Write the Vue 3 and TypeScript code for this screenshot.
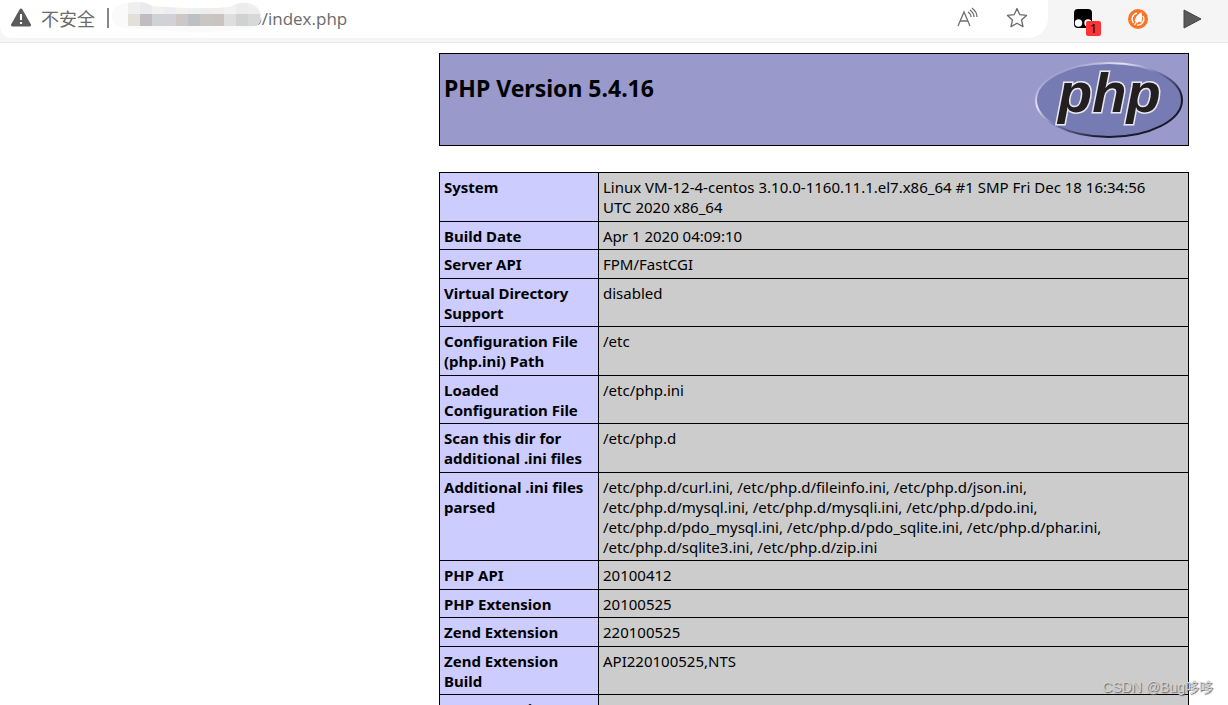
<script setup lang="ts">
interface InfoRow {
  label: string
  value: string
}

const rows: InfoRow[] = [
  { label: 'System', value: 'Linux VM-12-4-centos 3.10.0-1160.11.1.el7.x86_64 #1 SMP Fri Dec 18 16:34:56\nUTC 2020 x86_64' },
  { label: 'Build Date', value: 'Apr 1 2020 04:09:10' },
  { label: 'Server API', value: 'FPM/FastCGI' },
  { label: 'Virtual Directory Support', value: 'disabled' },
  { label: 'Configuration File (php.ini) Path', value: '/etc' },
  { label: 'Loaded\nConfiguration File', value: '/etc/php.ini' },
  { label: 'Scan this dir for additional .ini files', value: '/etc/php.d' },
  {
    label: 'Additional .ini files parsed',
    value:
      '/etc/php.d/curl.ini, /etc/php.d/fileinfo.ini, /etc/php.d/json.ini,\n/etc/php.d/mysql.ini, /etc/php.d/mysqli.ini, /etc/php.d/pdo.ini,\n/etc/php.d/pdo_mysql.ini, /etc/php.d/pdo_sqlite.ini, /etc/php.d/phar.ini,\n/etc/php.d/sqlite3.ini, /etc/php.d/zip.ini',
  },
  { label: 'PHP API', value: '20100412' },
  { label: 'PHP Extension', value: '20100525' },
  { label: 'Zend Extension', value: '220100525' },
  { label: 'Zend Extension\nBuild', value: 'API220100525,NTS' },
  { label: 'PHP Extension\nBuild', value: 'API20100525,NTS' },
]

const upperCells: string[] = ['#efefef', '#e8eaed', '#f1f1f0', '#eeeef2', '#f2f1f0', '#eeefef', '#ededee', '#eeeeed', '#f2f2f2', '#ececec', '#eeeeee']
const lowerCells: string[] = ['#e1e1da', '#c0bcc0', '#d0d3d5', '#d2d1d8', '#cdc7c5', '#bbc1c4', '#c9c7c6', '#c9c3c1', '#dedede', '#d0d2d2', '#d8d8d8']
</script>

<template>
  <div class="page">
    <header class="toolbar">
      <div class="address">
        <button class="security" type="button">
          <svg viewBox="0 0 20 20" width="20" height="20" aria-hidden="true">
            <path d="M10 2 18.500 17H1.500Z" fill="#5c5c5c" stroke="#5c5c5c" stroke-width="3" stroke-linejoin="round" />
            <path d="M10 6v6M10 14v2" stroke="#fff" stroke-width="2" />
          </svg>
          <span>不安全</span>
        </button>
        <span class="divider"></span>
        <svg class="masked" viewBox="0 0 150 32" width="150" height="32" aria-hidden="true">
          <defs>
            <clipPath id="smudge">
              <path d="M0 14Q0 3 14 1L26 0Q34 0 40 4Q90 8 118 5Q126 0 136 1Q149 4 149 15Q149 24 138 27Q90 32 60 29L14 26Q0 24 0 14Z" />
            </clipPath>
          </defs>
          <g clip-path="url(#smudge)">
            <rect width="150" height="32" fill="#fafafa" />
            <rect v-for="(c, i) in upperCells" :key="'u' + i" :x="16 + i * 12" y="0" width="12" height="12" :fill="c" />
            <rect v-for="(c, i) in lowerCells" :key="'l' + i" :x="16 + i * 12" y="12" width="12" height="12" :fill="c" />
          </g>
        </svg>
        <span class="url">0/index.php</span>
        <button class="icon read" type="button" aria-label="Read aloud">
          <svg viewBox="0 0 22 22" width="22" height="22" fill="none" stroke="#707070" stroke-width="1.300">
            <path d="M2 19 8 5l6 14M4 14h8M12 5q3 2 3 5M14 3q4 3 4 7M16 1q5 4 5 9" />
          </svg>
        </button>
        <button class="icon" type="button" aria-label="Add to favourites">
          <svg viewBox="0 0 22 22" width="22" height="22" fill="none" stroke="#6a6a6a" stroke-width="1.300" stroke-linejoin="round">
            <path d="m11 1.500 2.800 6.200 6.700.7-5 4.600 1.500 6.600-6-3.400-6 3.400 1.500-6.600-5-4.600 6.700-.7Z" />
          </svg>
        </button>
      </div>
      <nav class="extensions">
        <button class="icon" type="button" aria-label="Tampermonkey">
          <svg viewBox="0 0 28 34" width="28" height="34">
            <rect x="1" y="7" width="18" height="19" rx="4" fill="#000" />
            <circle cx="5.500" cy="21" r="3.700" fill="#fff" />
            <circle cx="15" cy="21" r="3.700" fill="#fff" />
          </svg>
          <span class="badge">1</span>
        </button>
        <button class="icon" type="button" aria-label="Rocket">
          <svg viewBox="0 0 20 20" width="20" height="20">
            <circle cx="10" cy="10" r="10" fill="#fa7427" />
            <path d="M9 4.200A6 6 0 0 0 5.500 14M15 7A6 6 0 0 1 9 16" fill="none" stroke="#fff" stroke-width="1.300" />
            <path d="M13.500 3Q8 6 6.500 12l2 .5.500 2 2-2 2.500 1Q15 8 13.500 3Z" fill="#fff" />
            <path d="m10 10-3.500 6" stroke="#fff" stroke-width="1.300" />
          </svg>
        </button>
        <button class="icon run" type="button" aria-label="Run">
          <svg viewBox="0 0 20 20" width="20" height="20">
            <path d="M2 1v18l17-9Z" fill="#5a5a5a" stroke="#444" />
          </svg>
        </button>
      </nav>
    </header>

    <main class="info">
      <section class="banner">
        <h1>PHP Version 5.4.16</h1>
        <svg viewBox="0 0 150 84" width="150" height="84" role="img" aria-label="PHP logo">
          <defs>
            <linearGradient id="rim" x1="0" y1="0" x2="1" y2="1">
              <stop offset="0.150" stop-color="#a0a2cc" />
              <stop offset="0.300" stop-color="#e4e5f2" />
              <stop offset="0.480" stop-color="#7376ac" />
              <stop offset="0.720" stop-color="#191a28" />
              <stop offset="1" stop-color="#191a28" />
            </linearGradient>
          </defs>
          <ellipse cx="75" cy="42" rx="73" ry="37" fill="#777bb3" stroke="url(#rim)" stroke-width="2" />
          <text x="24" y="54" class="logo-text">php</text>
        </svg>
      </section>

      <table class="details">
        <tbody>
          <tr v-for="row in rows" :key="row.label">
            <th scope="row">{{ row.label }}</th>
            <td>{{ row.value }}</td>
          </tr>
        </tbody>
      </table>
    </main>

    <div class="watermark">CSDN @Bug哆哆</div>
  </div>
</template>

<style>
body {
  margin: 0;
  background: #fff;
}
</style>

<style scoped>
.page {
  position: relative;
  height: 100vh;
  overflow: hidden;
  color: #000;
  font-family: "Noto Sans", "Open Sans", "Noto Sans CJK SC", sans-serif;
}

button {
  padding: 0;
  border: 0;
  background: none;
  font: inherit;
  color: inherit;
}

.toolbar {
  display: flex;
  box-sizing: border-box;
  height: 43px;
  padding-bottom: 4px;
  border-bottom: 1px solid #e5e5e5;
  background: #f5f5f5;
}

.address {
  display: flex;
  flex: 1;
  align-items: center;
  box-sizing: border-box;
  padding: 0 20px 2px 11px;
  border-radius: 0 0 20px 12px;
  background: #fff;
  color: #6a6a6a;
  font-family: "Open Sans", sans-serif;
  font-size: 17px;
}

.security {
  display: flex;
  align-items: center;
  gap: 10px;
  font-family: "Noto Sans CJK SC", sans-serif;
  font-size: 18px;
}

.divider {
  width: 2px;
  height: 20px;
  margin-left: 12px;
  background: #888;
}

.masked {
  z-index: 1;
  margin-left: 3px;
}

.url {
  flex: 1;
  margin-left: -10px;
}

.icon {
  position: relative;
  display: flex;
}

.read {
  margin-right: 28px;
}

.extensions {
  display: flex;
  align-items: center;
  gap: 27px;
  padding: 0 26px 0 25px;
}

.run {
  margin-left: 7px;
}

.badge {
  position: absolute;
  right: 0;
  bottom: 0;
  width: 15px;
  height: 15px;
  border-radius: 2px;
  background: #f33;
  font-size: 12px;
  line-height: 15px;
  text-align: center;
}

.info {
  width: 750px;
  max-width: 100%;
  margin: 10px 39px 0 auto;
}

.banner {
  display: flex;
  justify-content: space-between;
  box-sizing: border-box;
  height: 93px;
  padding: 4px;
  border: 1px solid #000;
  background: #9999cc;
}

h1 {
  margin: 14px 0 0;
  font-size: 23px;
  font-weight: bold;
  line-height: 32px;
}

.logo-text {
  fill: #231f20;
  stroke: #e8e8ee;
  stroke-width: 3px;
  paint-order: stroke;
  font: italic bold 56px "Liberation Sans", sans-serif;
}

.details {
  width: 100%;
  margin-top: 26px;
  border-collapse: collapse;
  table-layout: fixed;
  font-size: 15px;
  line-height: 20px;
}

th,
td {
  padding: 4px;
  border: 1px solid #000;
  text-align: left;
  vertical-align: top;
  white-space: pre-line;
}

tr:nth-child(even) > * {
  padding-bottom: 3px;
}

th {
  width: 150px;
  background: #ccccff;
}

td {
  background: #cccccc;
}

.watermark {
  position: absolute;
  right: 15px;
  bottom: 8px;
  color: #d4d4d4;
  font: 14px/20px "Liberation Sans", "Noto Sans CJK SC", sans-serif;
  text-shadow: 1px 1px 1px #666;
}
</style>
